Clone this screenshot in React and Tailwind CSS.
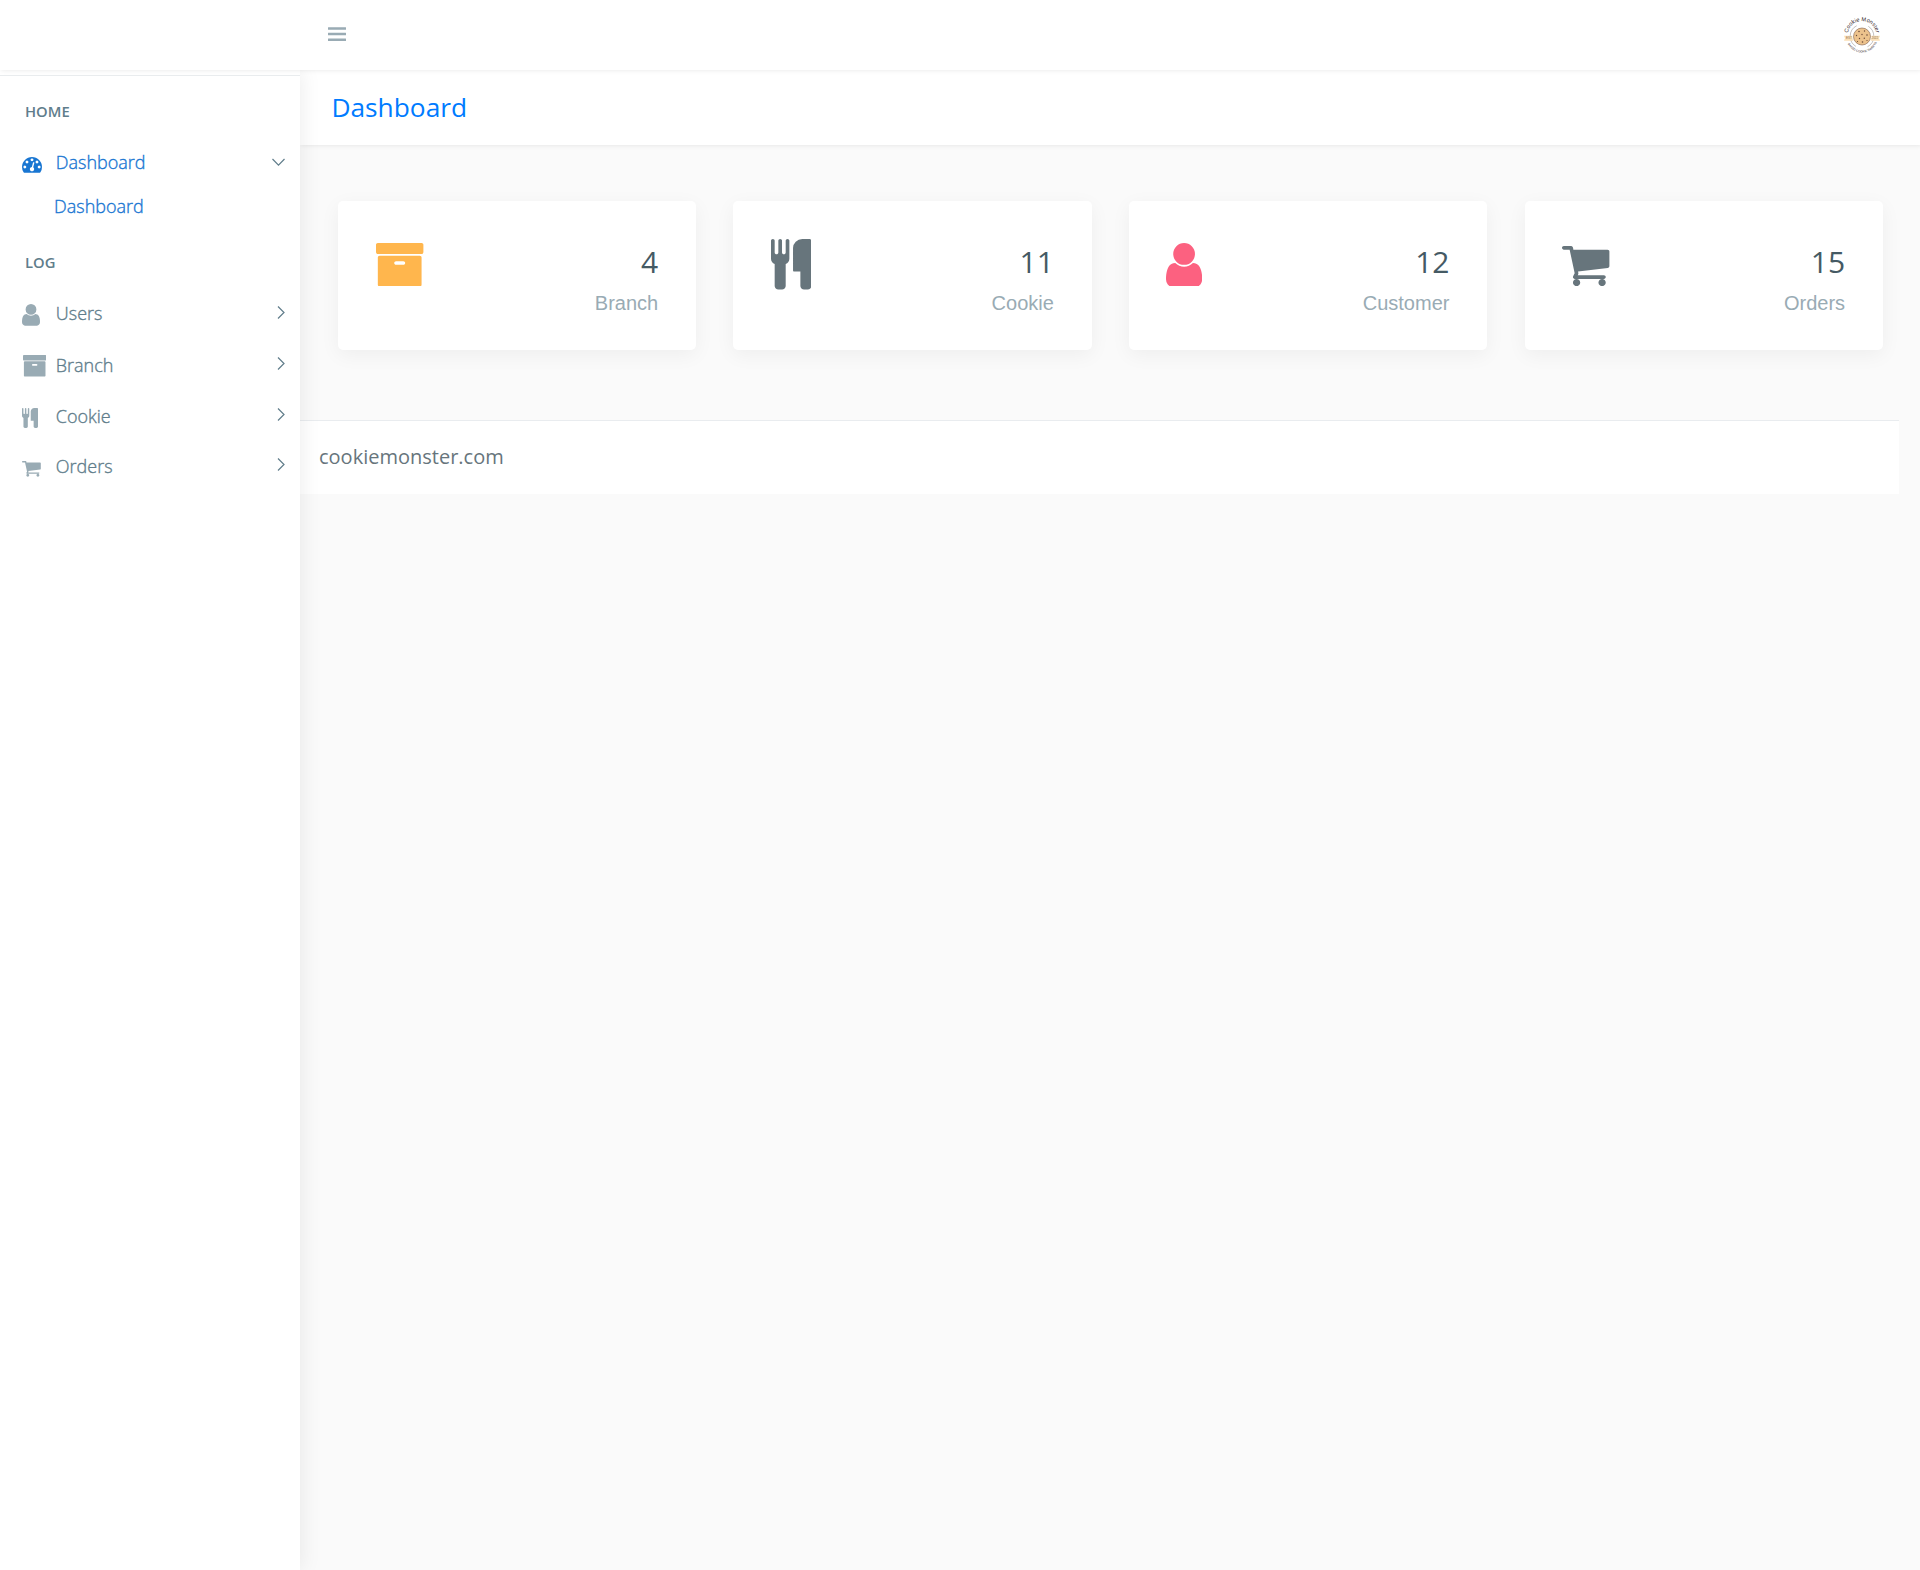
const ICONS = {
  gauge: {
    box: '0 256 1792 1408',
    d: 'M384 1152q0-53-37.5-90.5t-90.5-37.5-90.5 37.5-37.5 90.5 37.5 90.5 90.5 37.5 90.5-37.5 37.5-90.5zm192-448q0-53-37.5-90.5t-90.5-37.5-90.5 37.5-37.5 90.5 37.5 90.5 90.5 37.5 90.5-37.5 37.5-90.5zm428 481l101-382q6-26-7.5-48.5t-38.5-29.5-48 6.5-30 39.5l-101 382q-60 5-107 43.5t-63 98.5q-20 77 20 146t117 89 146-20 89-117q16-60-6-117t-72-91zm660-33q0-53-37.5-90.5t-90.5-37.5-90.5 37.5-37.5 90.5 37.5 90.5 90.5 37.5 90.5-37.5 37.5-90.5zm-640-640q0-53-37.5-90.5t-90.5-37.5-90.5 37.5-37.5 90.5 37.5 90.5 90.5 37.5 90.5-37.5 37.5-90.5zm448 192q0-53-37.5-90.5t-90.5-37.5-90.5 37.5-37.5 90.5 37.5 90.5 90.5 37.5 90.5-37.5 37.5-90.5zm320 448q0 261-141 483-19 29-54 29h-1402q-35 0-54-29-141-221-141-483 0-182 71-348t191-286 286-191 348-71 348 71 286 191 191 286 71 348z',
  },
  archive: {
    box: '64 128 1664 1536',
    d: 'M1088 832q0-26-19-45t-45-19h-256q-26 0-45 19t-19 45 19 45 45 19h256q26 0 45-19t19-45zm576-192v960q0 26-19 45t-45 19h-1408q-26 0-45-19t-19-45v-960q0-26 19-45t45-19h1408q26 0 45 19t19 45zm64-448v256q0 26-19 45t-45 19h-1536q-26 0-45-19t-19-45v-256q0-26 19-45t45-19h1536q26 0 45 19t19 45z',
  },
  cutlery: {
    box: '192 0 1408 1792',
    d: 'M832 64v640q0 61-35.5 111t-92.5 70v779q0 52-38 90t-90 38h-128q-52 0-90-38t-38-90v-779q-57-20-92.5-70t-35.5-111v-640q0-26 19-45t45-19 45 19 19 45v416q0 26 19 45t45 19 45-19 19-45v-416q0-26 19-45t45-19 45 19 19 45v416q0 26 19 45t45 19 45-19 19-45v-416q0-26 19-45t45-19 45 19 19 45zm768 0v1600q0 52-38 90t-90 38h-128q-52 0-90-38t-38-90v-512h-224q-13 0-22.5-9.5t-9.5-22.5v-800q0-132 94-226t226-94h256q26 0 45 19t19 45z',
  },
  user: {
    box: '256 128 1280 1536',
    d: 'M1536 1399q0 109-62.5 187t-150.5 78h-854q-88 0-150.5-78t-62.5-187q0-85 8.5-160.5t31.5-152 58.5-131 94-89 134.5-34.5q131 128 313 128t313-128q76 0 134.5 34.5t94 89 58.5 131 31.5 152 8.5 160.5zm-256-887q0 159-112.5 271.5t-271.5 112.5-271.5-112.5-112.5-271.5 112.5-271.5 271.5-112.5 271.5 112.5 112.5 271.5z',
  },
  cart: {
    box: '64 256 1664 1408',
    d: 'M704 1536q0 52-38 90t-90 38-90-38-38-90 38-90 90-38 90 38 38 90zm896 0q0 52-38 90t-90 38-90-38-38-90 38-90 90-38 90 38 38 90zm128-1088v512q0 24-16.5 42.5t-40.5 21.5l-1044 122q13 60 13 70 0 16-24 64h920q26 0 45 19t19 45-19 45-45 19h-1024q-26 0-45-19t-19-45q0-11 8-31.5t16-36 21.5-40 15.5-29.5l-177-823h-204q-26 0-45-19t-19-45 19-45 45-19h256q16 0 28.5 6.5t19.5 15.5 13 24.5 8 26 5.5 29.5 4.5 26h1201q26 0 45 19t19 45z',
  },
};

function Icon({ name, className }) {
  return (
    <svg viewBox={ICONS[name].box} preserveAspectRatio="none" fill="currentColor" className={className}>
      <path d={ICONS[name].d} />
    </svg>
  );
}

function Chevron({ open }) {
  return open ? (
    <svg className="mt-[21px] mr-[15px] ml-auto h-[9px] w-[13px]" viewBox="0 0 13 9" fill="none" stroke="#607d8b" strokeWidth="1.2">
      <path d="M.5 1 6.5 7.2 12.5 1" />
    </svg>
  ) : (
    <svg className="mt-[18px] mr-[15px] ml-auto h-[13px] w-[8px]" viewBox="0 0 8 13" fill="none" stroke="#607d8b" strokeWidth="1.2">
      <path d="M1 .5 7 6.5 1 12.5" />
    </svg>
  );
}

function NavItem({ icon, iconClass, label, labelClass, open, className }) {
  return (
    <a className={`flex items-start ${className}`}>
      <span className="flex w-[55.8px] shrink-0 pl-[22px]">
        <Icon name={icon} className={`shrink-0 ${iconClass}`} />
      </span>
      <span className={`text-[18px] leading-[28px] font-light [-webkit-text-stroke:0.35px] ${labelClass}`}>{label}</span>
      <Chevron open={open} />
    </a>
  );
}

function Logo() {
  return (
    <svg className="mt-[1.5px] h-[40px] w-[40px]" viewBox="0 0 40 40">
      <defs>
        <path id="arc-top" d="M5.6 19.5A14.4 14.4 0 0 1 34.4 19.5" />
        <path id="arc-bottom" d="M4 20.5A16 16 0 0 0 36 20.5" />
      </defs>
      <circle cx="20" cy="20.3" r="11.8" fill="none" stroke="#8b8583" strokeWidth=".5" strokeDasharray="25 12.07" strokeDashoffset="-24.8" />
      <path d="M2 19.7h36l-1 2.5 1 2.5H2l1-2.5z" fill="#fbe0b6" />
      <circle cx="20" cy="20.5" r="9.7" fill="#fff" />
      <circle cx="20" cy="20.5" r="8.5" fill="#ecc28c" stroke="#81604b" strokeWidth=".6" />
      <g fill="#6b4a39">
        <circle cx="17" cy="15.5" r=".8" />
        <circle cx="22.5" cy="15" r=".7" />
        <circle cx="20" cy="18.5" r=".7" />
        <circle cx="25" cy="19" r=".8" />
        <circle cx="14.5" cy="19.5" r=".7" />
        <circle cx="17.5" cy="22.5" r=".7" />
        <circle cx="22.3" cy="22.3" r=".7" />
        <circle cx="20.5" cy="26" r=".8" />
        <circle cx="25" cy="24.5" r=".6" />
        <circle cx="15.5" cy="25.5" r=".6" />
      </g>
      <g fill="#2f211d" fontFamily="Liberation Sans, sans-serif">
        <text fontSize="5.6" textLength="40">
          <textPath href="#arc-top" startOffset="2.5">Cookie Monster</textPath>
        </text>
        <text fontSize="3">
          <textPath href="#arc-bottom" startOffset="7.5">BAKED COOKIE SWEETS</textPath>
        </text>
        <text x="4" y="23.3" fontSize="3" fill="#8a6f55">EST</text>
        <text x="29.5" y="23.3" fontSize="3" fill="#8a6f55">2022</text>
      </g>
    </svg>
  );
}

const STATS = [
  { icon: 'archive', size: 'ml-[.6px] mt-[41.5px] h-[43.7px] w-[47.4px]', color: 'text-[#ffb64d]', value: '4', label: 'Branch' },
  { icon: 'cutlery', size: '-ml-[.8px] mt-[38px] h-[50.5px] w-[40.4px]', color: 'text-[#67757c]', value: '11', label: 'Cookie' },
  { icon: 'user', size: '-ml-[.7px] mt-[41.5px] h-[43.7px] w-[36.2px]', color: 'text-[#fc6180]', value: '12', label: 'Customer' },
  { icon: 'cart', size: '-ml-[.4px] mt-[45px] h-[40.2px] w-[47.4px]', color: 'text-[#67757c]', value: '15', label: 'Orders' },
];

function StatCard({ icon, size, color, value, label }) {
  return (
    <div className="flex h-[149px] flex-1 items-start justify-between rounded-[5px] bg-white pr-[37.7px] pl-[38px] shadow-[0_5px_20px_rgba(0,0,0,0.05)]">
      <Icon name={icon} className={`${size} ${color}`} />
      <div className="pt-[41px] text-right">
        <div className="text-[30px] leading-[40px] text-[#455a64]">{value}</div>
        <div className="pt-px font-['Liberation_Sans',Arial,sans-serif] text-[20px] leading-[40px] text-[#99abb4]">{label}</div>
      </div>
    </div>
  );
}

export default function App() {
  return (
    <div className="flex h-[1570px] w-[1920px] flex-col overflow-hidden bg-[#fafafa] font-['Open_Sans',sans-serif] text-[#67757c]">
      <header className="relative z-20 flex h-[70px] shrink-0 items-center justify-between bg-white pr-[38px] pl-[328px] shadow-[1px_0_5px_rgba(0,0,0,0.1)]">
        <svg className="-mt-[2px] h-[14px] w-[18px]" viewBox="0 0 18 14" fill="#99abb4">
          <rect y=".3" width="18" height="2.5" rx=".3" />
          <rect y="5.8" width="18" height="2.5" rx=".3" />
          <rect y="11.5" width="18" height="2.5" rx=".3" />
        </svg>
        <Logo />
      </header>

      <div className="flex flex-1">
        <nav className="relative z-10 flex w-[300px] shrink-0 flex-col bg-white text-[#607d8b] shadow-[1px_0_20px_rgba(0,0,0,0.08)]">
          <div className="h-[6px] shrink-0 border-b border-[#e9ecee]" />
          <div className="mt-[25px] pl-[25px] text-[14.8px] leading-[20px] font-semibold">HOME</div>
          <NavItem icon="gauge" iconClass="mt-[20px] h-[15.7px] w-[20px]" label="Dashboard" labelClass="pt-[11px]" open className="mt-[16px] h-[49px] text-[#1976d2]" />
          <a className="pl-[54px] text-[18px] leading-[40px] font-light text-[#1976d2] [-webkit-text-stroke:0.35px]">Dashboard</a>
          <div className="mt-[26px] pl-[25px] text-[14.8px] leading-[20px] font-semibold">LOG</div>
          <NavItem icon="user" iconClass="mt-[16px] h-[21.7px] w-[18px] text-[#99abb4]" label="Users" labelClass="pt-[11px]" className="mt-[16px] h-[51px]" />
          <NavItem icon="archive" iconClass="mt-[16px] ml-[.7px] h-[21.6px] w-[23.4px] text-[#99abb4]" label="Branch" labelClass="pt-[12px]" className="h-[51px]" />
          <NavItem icon="cutlery" iconClass="mt-[18px] h-[20px] w-[16px] text-[#99abb4]" label="Cookie" labelClass="pt-[12px]" className="h-[50px]" />
          <NavItem icon="cart" iconClass="mt-[21px] h-[15.7px] w-[18.8px] text-[#99abb4]" label="Orders" labelClass="pt-[12px]" className="h-[50px]" />
        </nav>

        <main className="flex flex-1 flex-col">
          <div className="flex h-[75px] items-center bg-white pb-[2px] pl-[31.4px] shadow-[1px_0_5px_rgba(0,0,0,0.1)]">
            <h3 className="text-[26.3px] leading-[36px] text-[#007bff]">Dashboard</h3>
          </div>
          <div className="mt-[56px] flex gap-[37.4px] pr-[37.3px] pl-[37.7px]">
            {STATS.map((s) => (
              <StatCard key={s.label} {...s} />
            ))}
          </div>
          <footer className="mt-[70px] mr-[21px] h-[74px] border-t border-[#e9ecef] bg-white pt-[21px] pl-[19px] text-[20px] leading-[30px]">
            cookiemonster.com
          </footer>
        </main>
      </div>
    </div>
  );
}
